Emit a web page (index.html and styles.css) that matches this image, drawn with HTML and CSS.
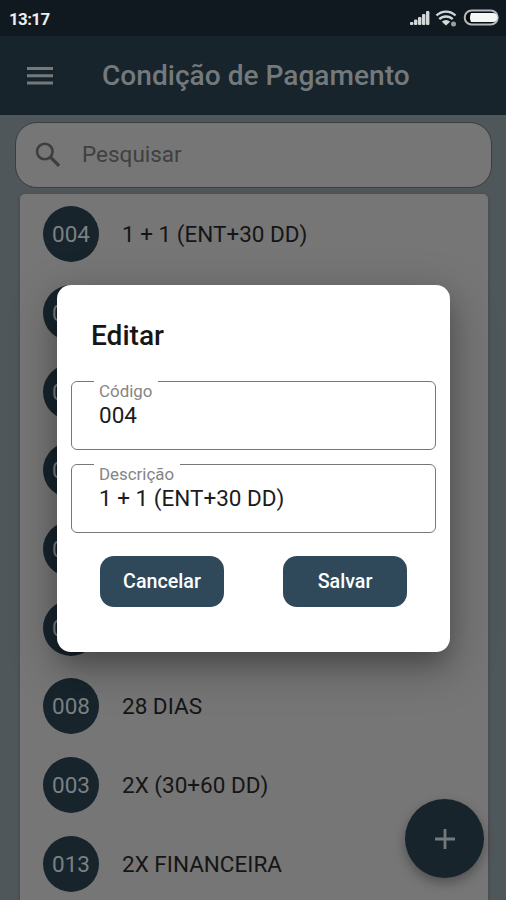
FILE: index.html
```html
<!DOCTYPE html>
<html lang="pt-BR">
<head>
<meta charset="utf-8">
<title>Condição de Pagamento</title>
<link rel="stylesheet" href="styles.css">
</head>
<body>
<div class="app">
  <div class="status">
    <span class="time">13:17</span>
    <svg class="status-icons" width="92" height="20" viewBox="0 0 92 20">
      <g fill="#d5d8d9">
        <rect x="1" y="13" width="3.400" height="3" rx="1"/>
        <rect x="5" y="10.500" width="3.400" height="5.500" rx="1"/>
        <rect x="9" y="8" width="3.400" height="8" rx="1"/>
        <rect x="13" y="5" width="3.400" height="11" rx="1"/>
        <rect x="17" y="2" width="3.400" height="14" rx="1"/>
        <path d="M32.800 12.700a6 6 0 0 1 8.400 0L37 16.500z"/>
        <circle cx="44.500" cy="15" r="2.500" fill="#9a9fa2"/>
      </g>
      <g fill="none" stroke="#d5d8d9" stroke-width="2.400">
        <path d="M27.500 6.500a13.500 13.500 0 0 1 19 0"/>
        <path d="M30.300 10.200a9.500 9.500 0 0 1 13.400 0"/>
      </g>
      <rect x="55.700" y="1.500" width="33" height="14" rx="7" fill="#080d10" stroke="#b5b9bb" stroke-width="2"/>
      <path d="M62 4H84a4.500 4.500 0 0 1 0 9H62q-2-4.500 0-9z" fill="#f5f6f6"/>
    </svg>
  </div>
  <header class="bar">
    <svg class="menu" width="26" height="18" viewBox="0 0 26 18"><path d="M0 1.500h26M0 8.700h26M0 16h26" stroke="#74797c" stroke-width="2.900"/></svg>
    <h1 class="title">Condição de Pagamento</h1>
  </header>
  <div class="search">
    <svg width="26" height="26" viewBox="0 0 26 26" fill="none" stroke="#3e3e3e" stroke-width="2.600"><circle cx="9.800" cy="9.500" r="7.800"/><path d="M15.300 15l8.800 8.800" stroke-width="3.200"/></svg>
    <span class="placeholder">Pesquisar</span>
  </div>
  <main class="list">
    <div class="row"><span class="code">004</span><span class="name">1 + 1 (ENT+30 DD)</span></div>
    <div class="row"><span class="code">0</span></div>
    <div class="row"><span class="code">0</span></div>
    <div class="row"><span class="code">0</span></div>
    <div class="row"><span class="code">0</span></div>
    <div class="row"><span class="code">0</span></div>
    <div class="row"><span class="code">008</span><span class="name">28 DIAS</span></div>
    <div class="row"><span class="code">003</span><span class="name">2X (30+60 DD)</span></div>
    <div class="row"><span class="code">013</span><span class="name">2X FINANCEIRA</span></div>
  </main>
</div>
<div class="fab"><svg width="20" height="20" viewBox="0 0 20 20"><path d="M10 0v20M0 10h20" stroke="#74797c" stroke-width="2.800"/></svg></div>
<section class="dialog">
  <h2 class="heading">Editar</h2>
  <fieldset class="field"><legend class="label">Código</legend><div class="value">004</div></fieldset>
  <fieldset class="field"><legend class="label">Descrição</legend><div class="value">1 + 1 (ENT+30 DD)</div></fieldset>
  <div class="actions"><button class="btn">Cancelar</button><button class="btn">Salvar</button></div>
</section>
</body>
</html>
```
FILE: styles.css
```css
* { box-sizing: border-box; }
body { margin: 0; font-family: Roboto, sans-serif; font-size: 22.5px; overflow: hidden; }
.app { height: 900px; background: #50575b; overflow: hidden; display: flex; flex-direction: column; }
.status { flex: none; height: 36px; background: #10191f; display: flex; justify-content: space-between; padding: 9px 5px 0 9px; }
.time { color: #eceeee; font-size: 16.9px; font-weight: 700; line-height: 20px; letter-spacing: -.6px; }
.bar { flex: none; height: 79px; background: #17242c; display: flex; align-items: center; padding-left: 27px; }
.title { margin: 1px 0 0 49px; font-size: 28.1px; font-weight: 500; color: #74797c; line-height: 36px; white-space: nowrap; }
.search { flex: none; height: 66px; margin: 7px 14px 0 15px; border: 1.500px solid #393e41; border-radius: 22px; background: #767676; display: flex; align-items: center; padding-left: 19px; gap: 21px; }
.placeholder { color: #404040; padding-bottom: 2px; }
.list { flex: none; height: 720px; margin: 6px 18px 0 20px; padding: 1px 0 0 23px; background: #767676; border-radius: 5px 5px 0 0; box-shadow: 0 1px 4px rgba(0,0,0,.2); }
.row { height: 78.7px; display: flex; align-items: center; gap: 23px; }
.code { width: 56px; height: 56px; border-radius: 50%; background: #17242c; color: #7a8083; display: flex; align-items: center; padding-left: 9px; }
.name { color: #151515; }
.fab { position: absolute; left: 405px; top: 799px; width: 79px; height: 79px; border-radius: 50%; background: #17242c; display: flex; align-items: center; justify-content: center; box-shadow: 0 5px 12px rgba(0,0,0,.32); }
.dialog { position: absolute; left: 57px; top: 285px; width: 393px; height: 367px; border-radius: 14px; background: #fff; padding: 34px 14px 0; box-shadow: 0 14px 44px 4px rgba(0,0,0,.26), 0 12px 22px -4px rgba(0,0,0,.22); }
.heading { height: 34px; margin: 0 0 28px 20px; font-size: 28.1px; line-height: 34px; font-weight: 500; color: #161616; }
.field { margin: 0 0 14px; height: 69px; padding: 0 0 0 21px; border: 1.500px solid #777; border-radius: 6px; min-width: 0; }
.label { height: 1px; margin-left: 1px; padding: 0 6px 0 5px; line-height: 21px; font-size: 16.9px; color: #858585; }
.value { margin: 19px 0 0 6px; line-height: 28px; color: #1c1c1c; }
.actions { display: flex; gap: 59px; padding-left: 29px; margin-top: 23px; }
.btn { width: 124px; height: 51px; border: 0; border-radius: 14px; background: #2f495b; color: #fff; font: 500 19.7px Roboto, sans-serif; padding: 0; }
```
